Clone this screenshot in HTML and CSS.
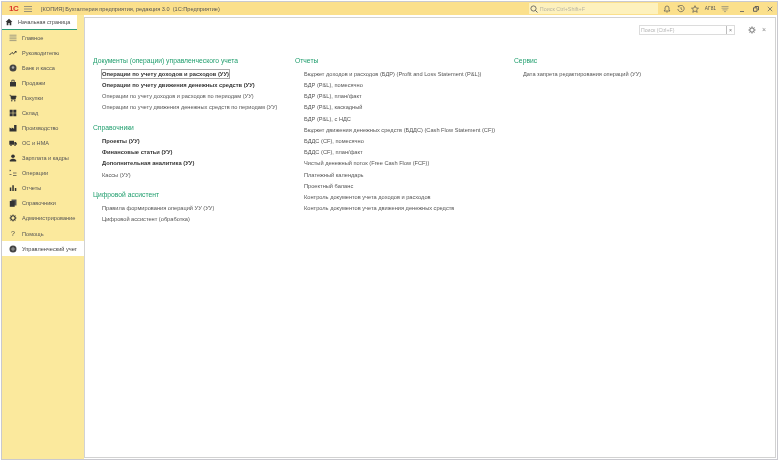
FILE: index.html
```html
<!DOCTYPE html>
<html lang="ru">
<head>
<meta charset="utf-8">
<title>Бухгалтерия предприятия</title>
<link rel="stylesheet" href="styles.css">
</head>
<body>
<div class="app">
  <header class="titlebar">
    <div class="title-left">
      <span class="logo">1С</span>
      <svg class="ico menu-ico" viewBox="0 0 8 8"><path d="M0 1.500h8M0 4h8M0 6.500h8" stroke="#8d8a78" stroke-width=".9"/></svg>
      <span class="title-text">[КОПИЯ] Бухгалтерия предприятия, редакция 3.0  (1С:Предприятие)</span>
    </div>
    <div class="title-right">
      <div class="global-search">
        <svg class="ico" viewBox="0 0 8 8"><circle cx="3.500" cy="3.500" r="2.600" fill="none" stroke="#555" stroke-width=".8"/><path d="M5.400 5.400L7.500 7.500" stroke="#555" stroke-width=".9"/></svg>
        <span>Поиск Ctrl+Shift+F</span>
      </div>
      <div class="tools">
        <svg class="ico" viewBox="0 0 8 8"><path d="M1 6h6L6 4.800V3a2 2 0 0 0-4 0v1.800zM3.300 7h1.400" fill="none" stroke="#555" stroke-width=".7"/></svg>
        <svg class="ico" viewBox="0 0 8 8"><path d="M1.500 1.500A3.200 3.200 0 1 1 .8 4M1.300 .5v1.300h1.300M4 2.200V4l1.300.8" fill="none" stroke="#555" stroke-width=".7"/></svg>
        <svg class="ico" viewBox="0 0 8 8"><path d="M4 .7l1 2.300 2.500.2-1.900 1.600.6 2.500L4 6 1.800 7.300l.6-2.500L.5 3.200 3 3z" fill="none" stroke="#555" stroke-width=".7"/></svg>
        <span class="user">АГ81</span>
        <svg class="ico" viewBox="0 0 8 8"><path d="M.5 1.500h7M.5 3.200h7M1.500 4.900h5M3 6.600h2" stroke="#8d8a78" stroke-width=".7"/></svg>
        <span class="win-btn"><svg class="ico" viewBox="0 0 8 8"><path d="M2 6.500h4" stroke="#666" stroke-width=".9"/></svg></span>
        <span class="win-btn"><svg class="ico" viewBox="0 0 8 8"><path d="M3 2.500V1.500h3.500V5H5.500M1.500 2.800H5v3.500H1.500z" fill="none" stroke="#555" stroke-width=".9"/></svg></span>
        <span class="win-btn"><svg class="ico" viewBox="0 0 8 8"><path d="M1.800 1.800l4.400 4.400M6.200 1.800L1.800 6.200" stroke="#666" stroke-width=".8"/></svg></span>
      </div>
    </div>
  </header>
  <div class="workspace">
    <aside class="side">
      <div class="home-tab">
        <svg class="ico" viewBox="0 0 8 8"><path d="M4 .8L.6 4h1.100v3.200h1.700V5h1.200v2.200h1.700V4h1.100z" fill="#333"/></svg>
        <span>Начальная страница</span>
      </div>
      <nav class="nav">
        <a class="nav-row"><svg class="ico" viewBox="0 0 8 8"><path d="M.5 1.200h7M.5 3h7M.5 4.800h7M.5 6.600h7" stroke="#8d8a78" stroke-width=".8"/></svg><span>Главное</span></a>
        <a class="nav-row"><svg class="ico" viewBox="0 0 8 8"><path d="M.5 6L3 3.500l1.500 1.200L7 2.500" fill="none" stroke="#333" stroke-width="1"/><path d="M5.500 2h2v2z" fill="#333"/></svg><span>Руководителю</span></a>
        <a class="nav-row"><svg class="ico" viewBox="0 0 8 8"><circle cx="4" cy="4" r="3.500" fill="#444"/><circle cx="4" cy="3.500" r="1.300" fill="#aaa"/></svg><span>Банк и касса</span></a>
        <a class="nav-row"><svg class="ico" viewBox="0 0 8 8"><path d="M1 3h6v4.500H1z" fill="#333"/><path d="M2.800 3V1.200h2.400V3" fill="none" stroke="#333" stroke-width=".8"/></svg><span>Продажи</span></a>
        <a class="nav-row"><svg class="ico" viewBox="0 0 8 8"><path d="M.5 1.200h1.200l.6 4h4l.9-3.200H2" fill="#333" stroke="#333" stroke-width=".6"/><circle cx="2.800" cy="6.800" r=".7" fill="#333"/><circle cx="5.800" cy="6.800" r=".7" fill="#333"/></svg><span>Покупки</span></a>
        <a class="nav-row"><svg class="ico" viewBox="0 0 8 8"><path d="M.7.700h3v3h-3zM4.300.700h3v3h-3zM.7 4.300h3v3h-3zM4.300 4.300h3v3h-3z" fill="#333"/></svg><span>Склад</span></a>
        <a class="nav-row"><svg class="ico" viewBox="0 0 8 8"><path d="M.5 7.500V3.500l2.300 1.200V3.500l2.300 1.200V1h2.400v6.500z" fill="#333"/></svg><span>Производство</span></a>
        <a class="nav-row"><svg class="ico" viewBox="0 0 8 8"><path d="M.3 1.800h4.700v4H.3zM5.300 3h1.500l1 1.300v1.500H5.300z" fill="#333"/><circle cx="2" cy="6.200" r=".8" fill="#333"/><circle cx="6" cy="6.200" r=".8" fill="#333"/></svg><span>ОС и НМА</span></a>
        <a class="nav-row"><svg class="ico" viewBox="0 0 8 8"><circle cx="4" cy="2.300" r="1.800" fill="#333"/><path d="M.8 7.500V6l2.300-1.200h1.800L7.200 6v1.500z" fill="#333"/></svg><span>Зарплата и кадры</span></a>
        <a class="nav-row"><svg class="ico" viewBox="0 0 8 8"><path d="M1 1.500h1M1 .8v1.500M4 4h3.500M4 6.500h3.500M.5 5.500h2" stroke="#444" stroke-width=".7"/></svg><span>Операции</span></a>
        <a class="nav-row"><svg class="ico" viewBox="0 0 8 8"><path d="M.8 3.500h1.500v3.500H.8zM3.300 1.200h1.500V7H3.300zM5.800 4h1.500v3H5.800z" fill="#333"/></svg><span>Отчеты</span></a>
        <a class="nav-row"><svg class="ico" viewBox="0 0 8 8"><path d="M2.500.500h5v6h-5z" fill="#555"/><path d="M.8 2h4.900v5.800H.8z" fill="#333"/></svg><span>Справочники</span></a>
        <a class="nav-row"><svg class="ico" viewBox="0 0 8 8"><circle cx="4" cy="4" r="2.200" fill="none" stroke="#333" stroke-width="1.100"/><path d="M4 .5v1.200M4 6.300v1.200M.5 4h1.200M6.300 4h1.200M1.500 1.500l.9.9M5.600 5.600l.9.9M6.500 1.500l-.9.9M2.400 5.600l-.9.9" stroke="#333" stroke-width=".8"/></svg><span>Администрирование</span></a>
        <a class="nav-row"><span class="q-ico">?</span><span>Помощь</span></a>
        <a class="nav-row active"><svg class="ico" viewBox="0 0 8 8"><circle cx="4" cy="4" r="3.500" fill="#444"/><path d="M2 4h4M4 2v4" stroke="#aaa" stroke-width=".8"/></svg><span>Управленческий учет</span></a>
      </nav>
    </aside>
    <main class="main">
      <div class="main-tools">
        <div class="search-box"><span class="search-input">Поиск (Ctrl+F)</span><span class="search-x">×</span></div>
        <svg class="gear" viewBox="0 0 8 8"><circle cx="4" cy="4" r="2.200" fill="none" stroke="#888" stroke-width="1.200"/><path d="M4 .3v1.400M4 6.300v1.400M.3 4h1.400M6.300 4h1.400M1.400 1.400l1 1M5.600 5.600l1 1M6.600 1.400l-1 1M2.400 5.600l-1 1" stroke="#888" stroke-width=".9"/></svg>
        <span class="close-x">×</span>
      </div>
      <div class="columns">
        <section class="col col-1">
          <h2>Документы (операции) управленческого учета</h2>
          <ul>
            <li class="b focus">Операции по учету доходов и расходов (УУ)</li>
            <li class="b">Операции по учету движения денежных средств (УУ)</li>
            <li>Операции по учету доходов и расходов по периодам (УУ)</li>
            <li>Операции по учету движения денежных средств по периодам (УУ)</li>
          </ul>
          <h2>Справочники</h2>
          <ul>
            <li class="b">Проекты (УУ)</li>
            <li class="b">Финансовые статьи (УУ)</li>
            <li class="b">Дополнительная аналитика (УУ)</li>
            <li>Кассы (УУ)</li>
          </ul>
          <h2>Цифровой ассистент</h2>
          <ul>
            <li>Правила формирования операций УУ (УУ)</li>
            <li>Цифровой ассистент (обработка)</li>
          </ul>
        </section>
        <section class="col col-2">
          <h2>Отчеты</h2>
          <ul>
            <li>Бюджет доходов и расходов (БДР) (Profit and Loss Statement (P&amp;L))</li>
            <li>БДР (P&amp;L), помесячно</li>
            <li>БДР (P&amp;L), план/факт</li>
            <li>БДР (P&amp;L), каскадный</li>
            <li>БДР (P&amp;L), с НДС</li>
            <li>Бюджет движения денежных средств (БДДС) (Cash Flow Statement (CF))</li>
            <li>БДДС (CF), помесячно</li>
            <li>БДДС (CF), план/факт</li>
            <li>Чистый денежный поток (Free Cash Flow (FCF))</li>
            <li>Платежный календарь</li>
            <li>Проектный баланс</li>
            <li>Контроль документов учета доходов и расходов</li>
            <li>Контроль документов учета движения денежных средств</li>
          </ul>
        </section>
        <section class="col col-3">
          <h2>Сервис</h2>
          <ul>
            <li>Дата запрета редактирования операций (УУ)</li>
          </ul>
        </section>
      </div>
    </main>
  </div>
</div>
</body>
</html>
```
FILE: styles.css
```css
* { box-sizing: border-box; }
html, body { margin: 0; padding: 0; height: 100%; background: #fff; }
body { padding: 1px 1px 2px 1px; font-family: "Liberation Sans", Arial, sans-serif; overflow: hidden; }
.app {
  height: 100%;
  border: 1px solid #c9c9cf;
  display: flex;
  flex-direction: column;
  filter: blur(0.35px);
  color: #4a4a4a;
}
.ico { width: 8px; height: 8px; flex: none; display: block; }

.titlebar {
  height: 13px;
  flex: none;
  background: #fbe08c;
  display: flex;
  justify-content: space-between;
  align-items: center;
  font-size: 5.600px;
}
.title-left { display: flex; align-items: center; padding-left: 7px; }
.logo { color: #d8352a; font-weight: bold; font-size: 8px; width: 15px; letter-spacing: -.5px; }
.menu-ico { margin-right: 9px; }
.title-text { white-space: pre; color: #555; font-size: 5.620px; }
.title-right { display: flex; height: 100%; align-items: center; }
.global-search {
  width: 129px;
  height: 11px;
  background: #fdf1bd;
  display: flex;
  align-items: center;
  gap: 2px;
  padding-left: 1px;
  color: #b9b5a2;
  font-size: 5.400px;
  margin-right: 5px;
}
.tools { display: flex; align-items: center; gap: 6px; padding-right: 3px; }
.tools .user { font-size: 4.800px; color: #555; margin: 0 -1px 0 0; }
.win-btn { display: flex; margin-left: 3px; }
.win-btn + .win-btn { margin-left: 0; }

.workspace { flex: 1; display: flex; min-height: 0; }
.side { width: 82px; flex: none; background: #fbe99d; display: flex; flex-direction: column; }
.home-tab {
  height: 15px;
  width: 75px;
  background: #fff;
  border-bottom: 1px solid #2f9d78;
  display: flex;
  align-items: center;
  gap: 5px;
  padding-left: 3px;
  font-size: 5.400px;
  color: #444;
}
.nav-row {
  height: 15.080px;
  display: flex;
  align-items: center;
  gap: 5px;
  padding-left: 7px;
  font-size: 5.600px;
  color: #555;
  white-space: nowrap;
}
.nav-row.active { background: #fff; color: #444; }
.q-ico { width: 8px; text-align: center; font-size: 7px; color: #444; flex: none; }

.main {
  flex: 1;
  background: #fff;
  margin: 2px 1px 1px 0;
  border: 1px solid #d2d2d2;
  min-width: 0;
}
.main-tools {
  height: 36.700px;
  padding-top: 7px;
  padding-right: 9px;
  display: flex;
  justify-content: flex-end;
  align-items: flex-start;
}
.search-box {
  width: 96px;
  height: 10px;
  border: 1px solid #dcdcdc;
  display: flex;
  font-size: 5.200px;
  color: #b5b5b5;
  line-height: 8px;
  margin-right: 13px;
}
.search-input { flex: 1; padding-left: 1px; border-right: 1px solid #bdbdbd; }
.search-x { width: 7px; text-align: center; color: #777; }
.gear { width: 8px; height: 8px; margin: 1px 6px 0 0; }
.close-x { font-size: 7px; line-height: 9px; color: #888; }

.columns { display: flex; padding-left: 8px; }
.col-1 { width: 202px; }
.col-2 { width: 219px; }
.col-3 { flex: 1; }
h2 {
  margin: 0;
  font-size: 6.750px;
  font-weight: normal;
  color: #1f9e6d;
  line-height: 12px;
  height: 12px;
  white-space: nowrap;
}
ul { list-style: none; margin: 0 0 8.400px; padding: 2px 0 0 9px; }
li {
  height: 11.220px;
  line-height: 11.220px;
  font-size: 5.660px;
  color: #555;
  white-space: nowrap;
}
li.b { font-weight: bold; font-size: 5.780px; color: #333; }
li.focus { outline: 1px solid #a8a8a8; outline-offset: -1px; margin-left: -1px; padding-left: 1px; width: 129px; height: 10px; line-height: 10px; margin-bottom: 1.220px; }
```
